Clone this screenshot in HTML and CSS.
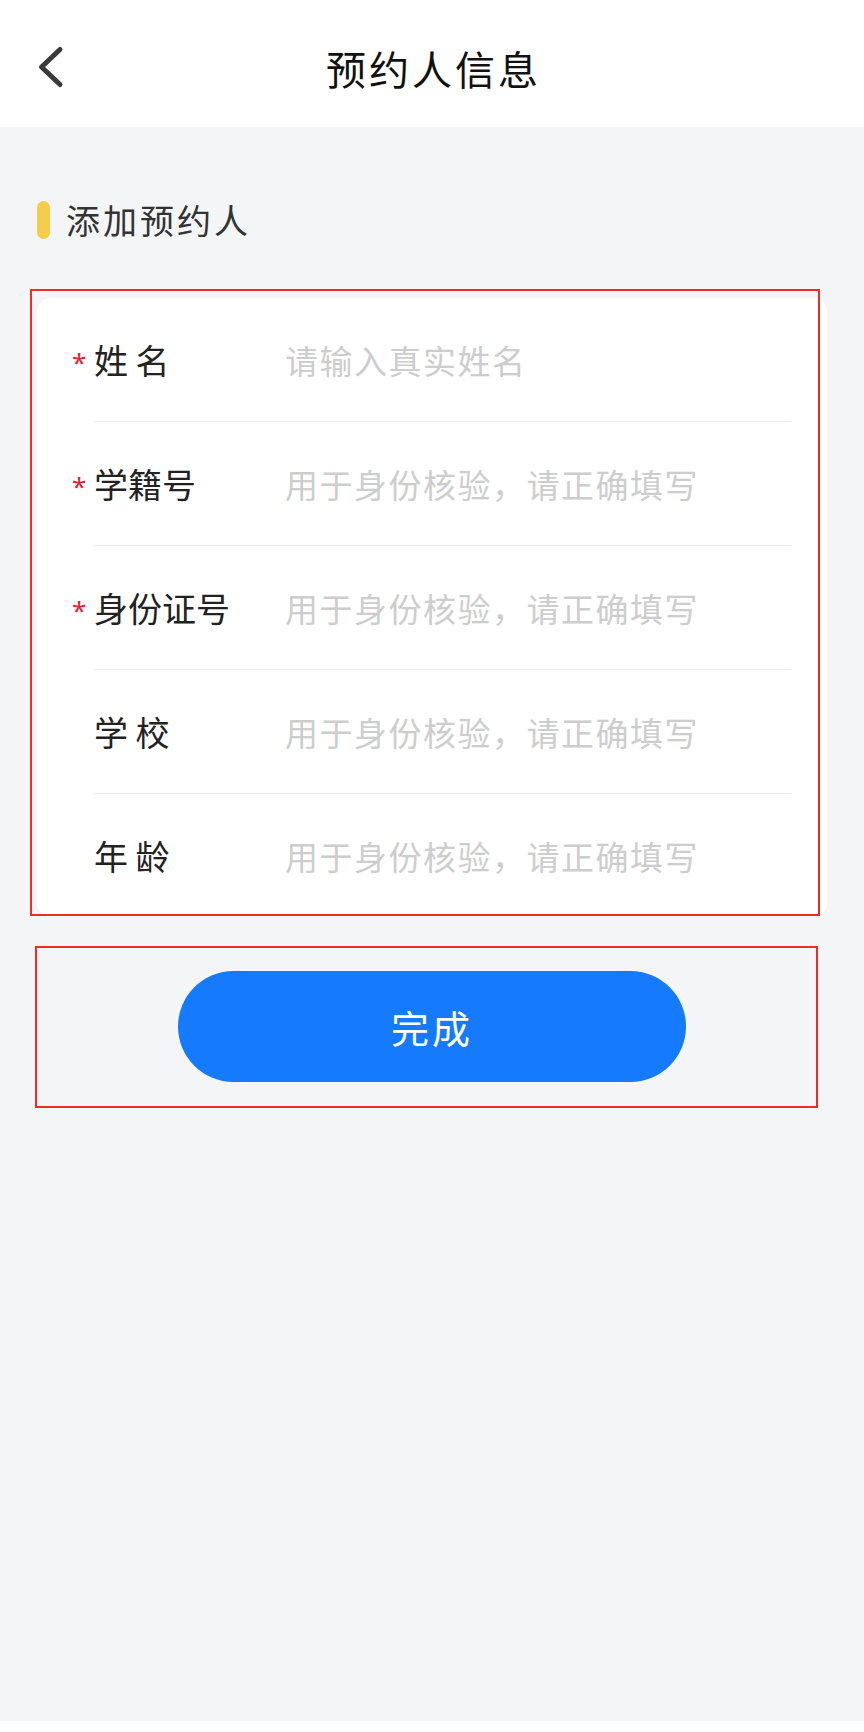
FILE: index.html
```html
<!DOCTYPE html>
<html lang="zh-CN">
<head>
  <meta charset="UTF-8">
  <meta name="viewport" content="width=device-width, initial-scale=1.0">
  <title>预约人信息</title>
  <link rel="stylesheet" href="styles.css">
</head>
<body>
  <header class="nav-bar">
    <button class="back-btn" type="button" aria-label="返回">
      <svg width="28" height="44" viewBox="0 0 28 44">
        <polyline points="24,4.5 5.5,22 24,39.5" fill="none" stroke="#3a3a3a" stroke-width="5" stroke-linecap="round" stroke-linejoin="round"/>
      </svg>
    </button>
    <h1 class="nav-title">预约人信息</h1>
  </header>

  <main class="page">
    <div class="section-title">
      <span class="section-bar"></span>
      <span class="section-text">添加预约人</span>
    </div>

    <form class="form-card">
      <div class="form-row">
        <label class="form-label"><span class="req">*</span>姓 名</label>
        <input class="form-input" type="text" placeholder="请输入真实姓名">
      </div>
      <div class="form-row">
        <label class="form-label"><span class="req">*</span>学籍号</label>
        <input class="form-input" type="text" placeholder="用于身份核验，请正确填写">
      </div>
      <div class="form-row">
        <label class="form-label"><span class="req">*</span>身份证号</label>
        <input class="form-input" type="text" placeholder="用于身份核验，请正确填写">
      </div>
      <div class="form-row">
        <label class="form-label">学 校</label>
        <input class="form-input" type="text" placeholder="用于身份核验，请正确填写">
      </div>
      <div class="form-row">
        <label class="form-label">年 龄</label>
        <input class="form-input" type="text" placeholder="用于身份核验，请正确填写">
      </div>
    </form>

    <div class="actions">
      <button class="submit-btn" type="button">完成</button>
    </div>
  </main>

  <div class="home-strip"></div>
</body>
</html>
```

FILE: styles.css
```css
body {
  margin: 0;
  padding: 0;
  min-height: 100vh;
  display: flex;
  flex-direction: column;
  background: #f4f5f7;
  font-family: "Noto Sans CJK SC", "Noto Sans", sans-serif;
  color: #222;
}

/* Top navigation */
.nav-bar {
  height: 127px;
  box-sizing: border-box;
  padding-top: 8px;
  background: #fff;
  display: grid;
  grid-template-columns: 1fr auto 1fr;
  align-items: center;
}

.back-btn {
  justify-self: start;
  margin: 0 0 1px 36px;
  padding: 0;
  border: none;
  background: none;
  display: flex;
}

.nav-title {
  margin: 0;
  padding-left: 3px;
  font-size: 40px;
  font-weight: 400;
  letter-spacing: 3px;
  line-height: 1;
  color: #111;
}

.page {
  flex: 1;
}

/* Section heading */
.section-title {
  display: flex;
  align-items: center;
  gap: 16px;
  padding: 74px 37px 0;
}

.section-bar {
  width: 13px;
  height: 38px;
  border-radius: 7px;
  background: #f5cd4b;
}

.section-text {
  font-size: 34px;
  letter-spacing: 3px;
  line-height: 38px;
  color: #333;
}

/* Form card */
.form-card {
  position: relative;
  margin: 59px 37px 0;
  background: #fff;
  border-radius: 14px;
}

/* annotation frame drawn over the card */
.form-card::after {
  content: '';
  position: absolute;
  top: -9px;
  left: -7px;
  right: 7px;
  bottom: 1px;
  border: 2px solid #ee2b24;
  pointer-events: none;
}

.form-row {
  height: 123px;
  margin: 0 36px 0 57px;
  display: flex;
  align-items: center;
  border-bottom: 1px solid #efefef;
}

.form-row:last-child {
  border-bottom: none;
}

.form-label {
  width: 191px;
  flex-shrink: 0;
  display: flex;
  font-size: 34px;
  line-height: 34px;
  color: #222;
}

.req {
  width: 22px;
  margin-left: -22px;
  padding-top: 6px;
  font-family: "Noto Sans", sans-serif;
  font-size: 26px;
  line-height: 1;
  color: #e0212f;
}

.form-input {
  flex: 1;
  min-width: 0;
  padding: 0;
  border: none;
  outline: none;
  background: transparent;
  font-family: inherit;
  font-size: 33px;
  letter-spacing: 1.5px;
  line-height: 40px;
  color: #222;
}

.form-input::placeholder {
  color: #cdcdcd;
}

/* Submit button */
.actions {
  margin: 29px 46px 0 35px;
  padding: 23px 0 24px 141px;
  border: 2px solid #ee2b24;
}

.submit-btn {
  display: block;
  width: 508px;
  height: 111px;
  padding: 0;
  border: none;
  border-radius: 56px;
  background: #157afb;
  color: #fff;
  font-family: inherit;
  font-size: 38px;
  letter-spacing: 3px;
}

.home-strip {
  height: 11px;
  background: #fff;
}
```
